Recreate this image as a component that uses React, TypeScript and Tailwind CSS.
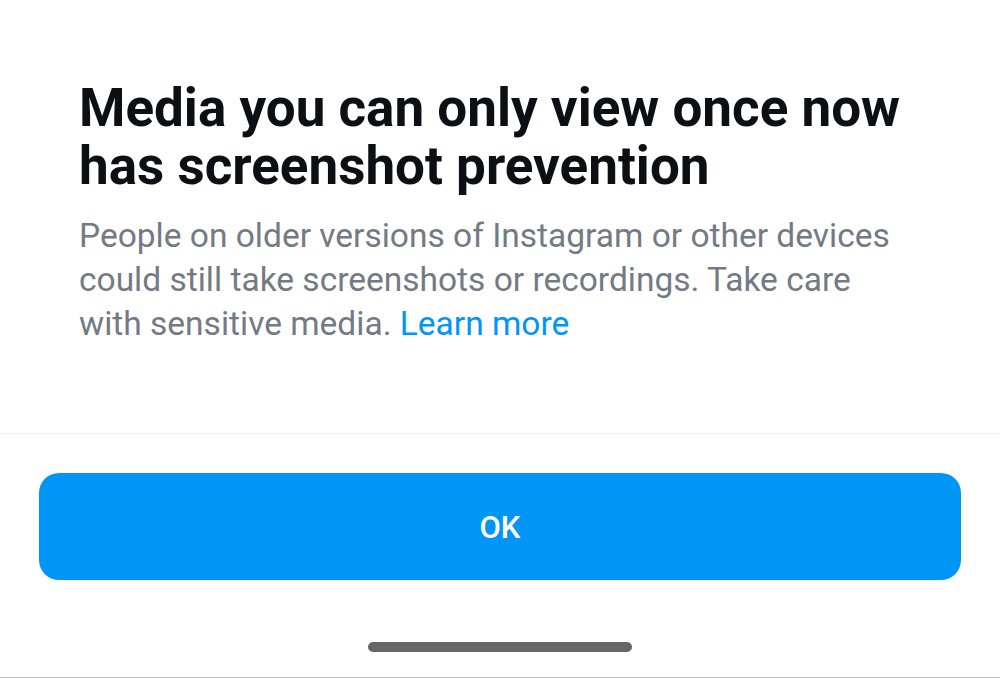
export default function App() {
  return (
    <div className="w-[1000px] h-[678px] bg-white flex flex-col overflow-hidden font-['Roboto',sans-serif]">
      {/* Body */}
      <div className="h-[433px] pl-[79px] pr-[95px] pt-[79px]">
        <h1 className="text-[53px] leading-[58px] font-bold text-[#0c1014]">
          Media you can only view once now has screenshot prevention
        </h1>
        <p className="mt-[19px] text-[33.5px] leading-[44px] text-[#737a85]">
          People on older versions of Instagram or other devices could still take screenshots or recordings. Take care
          with sensitive media. <span className="text-[#0095f6]">Learn more</span>
        </p>
      </div>

      <hr className="border-0 h-px bg-[#efefef]" />

      {/* Action */}
      <div className="px-[39px] pt-[39px]">
        <button className="w-full h-[107px] rounded-[20px] bg-[#0095f6] text-white text-[31px] font-medium pt-[3px]">
          OK
        </button>
      </div>

      <div className="flex-1 flex items-end justify-center pb-[25px]">
        <div className="w-[264px] h-[10px] rounded-full bg-[#666666]" />
      </div>
      <div className="h-px bg-[#bdbdbd]" />
    </div>
  )
}
